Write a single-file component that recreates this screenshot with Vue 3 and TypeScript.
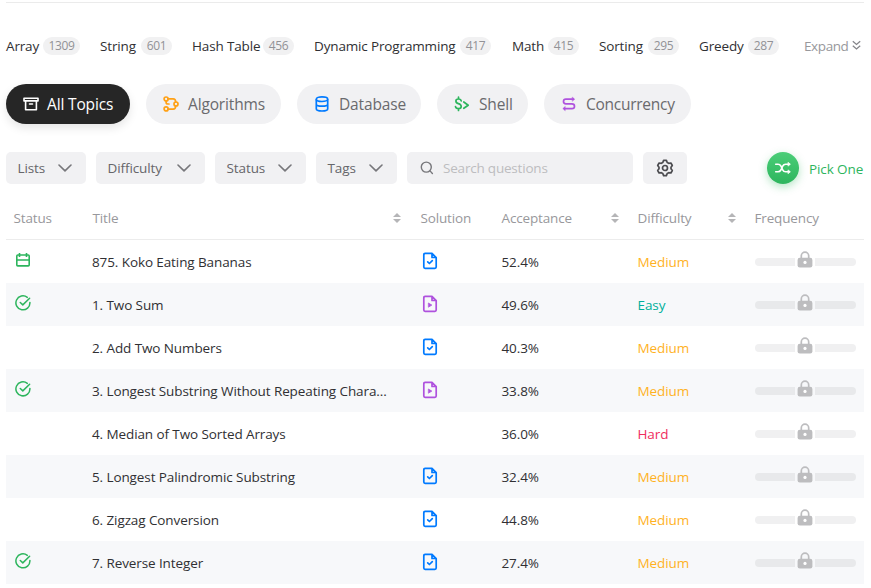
<script setup lang="ts">
interface Tag { name: string; count: number; cls?: string }
interface Topic { name: string; icon: string }
interface Problem {
  id: number
  title: string
  status: 'daily' | 'done' | ''
  solution: 'article' | 'video' | ''
  acceptance: string
  difficulty: 'Easy' | 'Medium' | 'Hard'
}

const tags: Tag[] = [
  { name: 'Array', count: 1309, cls: 't-array' },
  { name: 'String', count: 601, cls: 't-string' },
  { name: 'Hash Table', count: 456, cls: 't-hash' },
  { name: 'Dynamic Programming', count: 417, cls: 't-dp' },
  { name: 'Math', count: 415, cls: 't-math' },
  { name: 'Sorting', count: 295, cls: 't-sorting' },
  { name: 'Greedy', count: 287, cls: 't-greedy' },
]

const topics: Topic[] = [
  { name: 'All Topics', icon: 'all' },
  { name: 'Algorithms', icon: 'algorithms' },
  { name: 'Database', icon: 'database' },
  { name: 'Shell', icon: 'shell' },
  { name: 'Concurrency', icon: 'concurrency' },
]

const filters: string[] = ['Lists', 'Difficulty', 'Status', 'Tags']

const columns: { name: string; sortable: boolean }[] = [
  { name: 'Status', sortable: false },
  { name: 'Title', sortable: true },
  { name: 'Solution', sortable: false },
  { name: 'Acceptance', sortable: true },
  { name: 'Difficulty', sortable: true },
  { name: 'Frequency', sortable: false },
]

const problems: Problem[] = [
  { id: 875, title: 'Koko Eating Bananas', status: 'daily', solution: 'article', acceptance: '52.4%', difficulty: 'Medium' },
  { id: 1, title: 'Two Sum', status: 'done', solution: 'video', acceptance: '49.6%', difficulty: 'Easy' },
  { id: 2, title: 'Add Two Numbers', status: '', solution: 'article', acceptance: '40.3%', difficulty: 'Medium' },
  { id: 3, title: 'Longest Substring Without Repeating Chara...', status: 'done', solution: 'video', acceptance: '33.8%', difficulty: 'Medium' },
  { id: 4, title: 'Median of Two Sorted Arrays', status: '', solution: '', acceptance: '36.0%', difficulty: 'Hard' },
  { id: 5, title: 'Longest Palindromic Substring', status: '', solution: 'article', acceptance: '32.4%', difficulty: 'Medium' },
  { id: 6, title: 'Zigzag Conversion', status: '', solution: 'article', acceptance: '44.8%', difficulty: 'Medium' },
  { id: 7, title: 'Reverse Integer', status: 'done', solution: 'article', acceptance: '27.4%', difficulty: 'Medium' },
]
</script>

<template>
  <main class="page">
    <nav class="tags">
      <a v-for="tag in tags" :key="tag.name" class="tag" :class="tag.cls">
        <span class="tag-name">{{ tag.name }}</span>
        <span class="count">{{ tag.count }}</span>
      </a>
      <a class="expand">
        <span>Expand</span>
        <svg width="9" height="11" viewBox="0 0 9 11" fill="none" stroke="#85858a" stroke-width="1.3">
          <path d="M.8 1.2 4.5 4.4 8.2 1.2M.8 5.7 4.5 8.9 8.2 5.7" />
        </svg>
      </a>
    </nav>

    <nav class="topics">
      <a v-for="topic in topics" :key="topic.name" class="topic" :class="topic.icon">
        <svg v-if="topic.icon === 'all'" class="topic-icon" viewBox="0 0 16 16" fill="none" stroke="#fff" stroke-width="1.6" stroke-linejoin="round" stroke-linecap="round">
          <path d="M1 2.2H15V4.9H1ZM2.6 5V13.7H13.4V5M6.5 8H9.5" />
        </svg>
        <svg v-else-if="topic.icon === 'algorithms'" class="topic-icon" viewBox="0 0 16 16" fill="none" stroke="#ffa116" stroke-width="1.7">
          <circle cx="3.1" cy="3" r="2" />
          <circle cx="3.1" cy="12.9" r="2" />
          <circle cx="13" cy="8" r="2" />
          <path d="M5 2.8H10.2Q12.6 2.8 12.7 6M5 13.1H10.2Q12.6 13.1 12.7 10M3.1 5V6.2Q3.1 8 5 8H6" stroke-linecap="round" />
        </svg>
        <svg v-else-if="topic.icon === 'database'" class="topic-icon" viewBox="0 0 16 16" fill="none" stroke="#007aff" stroke-width="1.7">
          <ellipse cx="8" cy="3.2" rx="5.7" ry="2.3" />
          <path d="M2.3 3.2V12.7C2.3 14 4.8 15 8 15S13.7 14 13.7 12.7V3.2M2.3 7.9C2.3 9.2 4.8 10.2 8 10.2S13.7 9.2 13.7 7.9" />
        </svg>
        <svg v-else-if="topic.icon === 'shell'" class="topic-icon" viewBox="0 0 16 16" fill="none" stroke="#2db55d" stroke-width="1.7" stroke-linecap="round" stroke-linejoin="round">
          <path d="M7.2 4.9Q6.8 3 4.5 3Q1.9 3 1.9 5Q1.9 6.9 4.4 7.6Q7.2 8.4 7.2 10.5Q7.2 12.7 4.5 12.7Q1.9 12.7 1.5 10.6M4.5 1.2V3M4.5 12.7V14.5M9.8 6 14.2 9.2 9.8 12.3" />
        </svg>
        <svg v-else class="topic-icon" viewBox="0 0 16 16" fill="none" stroke="#af52de" stroke-width="1.7" stroke-linecap="round" stroke-linejoin="round">
          <path d="M12 3.2H4.9Q2.5 3.2 2.5 5.5T4.9 7.8H11Q13.5 7.8 13.5 10.2T11 12.6H4" />
          <path d="M11.5 1.3 13.7 3.2 11.5 5.1ZM4 10.7 1.8 12.6 4 14.5Z" fill="#af52de" stroke-width=".5" />
        </svg>
        <span>{{ topic.name }}</span>
      </a>
    </nav>

    <section class="toolbar">
      <button v-for="filter in filters" :key="filter" class="filter" :class="'f-' + filter.toLowerCase()">
        <span>{{ filter }}</span>
        <svg width="14" height="8" viewBox="0 0 14 8" fill="none" stroke="#77777b" stroke-width="1.6" stroke-linecap="round" stroke-linejoin="round">
          <path d="M1 1 7 6.9 13 1" />
        </svg>
      </button>
      <label class="search">
        <svg width="14" height="14" viewBox="0 0 14 14" fill="none" stroke="#77777b" stroke-width="1.4" stroke-linecap="round">
          <circle cx="6.3" cy="6.1" r="5" />
          <path d="M10 9.9 12.4 12.5" />
        </svg>
        <span>Search questions</span>
      </label>
      <button class="settings">
        <svg width="18" height="18" viewBox="0 0 18 18" fill="none" stroke="#4c4c50" stroke-width="1.7" stroke-linejoin="round">
          <path d="M7.6 1.4H10.4L11.2 3.5 12.7 4.3 14.9 4 16.3 6.5 15 8.2V9.8L16.3 11.5 14.9 14 12.7 13.7 11.2 14.5 10.4 16.6H7.6L6.8 14.5 5.3 13.7 3.1 14 1.7 11.5 3 9.8V8.2L1.7 6.5 3.1 4 5.3 4.3 6.8 3.5Z" />
          <circle cx="9" cy="9" r="2.5" />
        </svg>
      </button>
      <a class="pick">
        <span class="pick-disc">
          <svg width="18" height="14" viewBox="0 0 18 14" fill="none" stroke="#fff" stroke-width="1.6" stroke-linecap="round" stroke-linejoin="round">
            <path d="M1.7 3.2H4Q5.8 3.2 6.9 5L8.7 8.8Q9.6 10.8 11.6 10.8H14.8M1.7 10.8H4Q5.8 10.8 6.9 9L8.7 5.2Q9.6 3.2 11.6 3.2H14.8" />
            <path d="M14.3 1.5 16.4 3.2 14.3 4.9ZM14.3 9.1 16.4 10.8 14.3 12.5Z" fill="#fff" stroke-width=".7" />
          </svg>
        </span>
        <span class="pick-text">Pick One</span>
      </a>
    </section>

    <section class="table">
      <div class="row head">
        <div v-for="col in columns" :key="col.name" class="cell">
          <span>{{ col.name }}</span>
          <svg v-if="col.sortable" class="sort" width="8" height="10" viewBox="0 0 8 10" fill="#b5b5b7">
            <path d="M4 0 8 4H0ZM0 6H8L4 10Z" />
          </svg>
        </div>
      </div>
      <div v-for="p in problems" :key="p.id" class="row body-row">
        <div class="cell status">
          <svg v-if="p.status === 'daily'" width="16" height="16" viewBox="0 0 16 16" fill="none" stroke="#2db55d" stroke-width="1.6" stroke-linejoin="round">
            <rect x="1.8" y="3" width="12.4" height="10.9" rx="1" />
            <path d="M1.8 8H14.2M4.5 1V5M11.5 1V5" />
          </svg>
          <svg v-else-if="p.status === 'done'" width="16" height="16" viewBox="0 0 16 16" fill="none" stroke="#2db55d" stroke-width="1.5" stroke-linecap="round" stroke-linejoin="round">
            <path d="M12.3 2.4A7 7 0 1 0 14.9 7.4M5.3 7.5 7.8 9.9 14.6 3.2" />
          </svg>
        </div>
        <div class="cell title">{{ p.id }}. {{ p.title }}</div>
        <div class="cell solution">
          <svg v-if="p.solution" width="16" height="18" viewBox="0 0 16 18" fill="none" :class="p.solution" stroke="currentColor" stroke-width="1.7" stroke-linejoin="round" stroke-linecap="round">
            <path d="M10 1.4H3.1Q1.8 1.4 1.8 2.7V15.1Q1.8 16.4 3.1 16.4H12.9Q14.2 16.4 14.2 15.1V5.6ZM10 1.6V5.5H14" />
            <path v-if="p.solution === 'article'" d="M5.7 9.9 7.4 11.5 10.3 8.7" />
            <path v-else d="M6.7 8.2 9.8 10.1 6.7 12Z" fill="currentColor" stroke-width=".8" />
          </svg>
        </div>
        <div class="cell accept">{{ p.acceptance }}</div>
        <div class="cell" :class="p.difficulty.toLowerCase()">{{ p.difficulty }}</div>
        <div class="cell frequency">
          <span class="bar"></span>
          <svg class="lock" width="16" height="17" viewBox="0 0 16 17">
            <path d="M4.3 8V4.9A3.7 3.7 0 0 1 11.7 4.9V8" fill="none" stroke="#bdbdbf" stroke-width="1.7" />
            <rect x=".6" y="6.8" width="14.8" height="9.7" rx="2.2" fill="#bdbdbf" />
            <circle cx="8" cy="11.4" r="1.6" fill="#fff" />
          </svg>
          <span class="bar"></span>
        </div>
      </div>
    </section>
  </main>
</template>

<style>
body {
  margin: 0;
  background: #fff;
}
</style>

<style scoped>
* {
  box-sizing: border-box;
}

.page {
  width: 858px;
  height: 588px;
  margin-left: 6px;
  padding-top: 2px;
  font-family: "Open Sans", "Noto Sans", sans-serif;
  font-size: 13.5px;
  letter-spacing: -0.1px;
  color: #303033;
  white-space: nowrap;
}

.tags {
  height: 82px;
  padding-top: 4px;
  display: flex;
  align-items: center;
  border-top: 1px solid #ebebeb;
}

.tag {
  display: flex;
  align-items: center;
  justify-content: space-between;
  width: 72px;
  margin-right: 20px;
  letter-spacing: -0.15px;
}

.tag.t-array { width: 74px; }
.tag.t-hash { width: 102px; }
.tag.t-dp { width: 177px; margin-right: 21px; }
.tag.t-math { width: 67px; }
.tag.t-sorting { width: 80px; }
.tag.t-greedy { width: 80px; margin-right: 25px; }

.count {
  height: 18px;
  width: 31px;
  border-radius: 9px;
  background: #f1f1f2;
  color: #929296;
  font-size: 12px;
  line-height: 18px;
  text-align: center;
  letter-spacing: -0.3px;
}

.t-array .count { width: 37px; }

.expand {
  display: flex;
  align-items: center;
  gap: 4px;
  color: #98989c;
  letter-spacing: -0.4px;
}

.topics {
  display: flex;
  gap: 16px;
  height: 40px;
}

.topic {
  display: flex;
  align-items: center;
  width: 124px;
  padding-left: 17px;
  gap: 9px;
  border-radius: 20px;
  background: #f1f1f3;
  color: #6a6a6d;
  font-size: 15.5px;
  letter-spacing: -0.15px;
}

.topic.all {
  gap: 8px;
  background: #262626;
  color: #fff;
  box-shadow: 0 4px 10px rgba(0, 0, 0, .1);
}

.topic.algorithms { width: 135px; }
.topic.shell { width: 91px; }
.topic.concurrency { width: 147px; letter-spacing: -0.27px; }

.topic-icon {
  width: 16px;
  height: 16px;
  flex: none;
}

.toolbar {
  display: flex;
  gap: 10px;
  height: 32px;
  margin-top: 28px;
}

button {
  border: 0;
  padding: 0;
  font: inherit;
  letter-spacing: inherit;
}

.filter,
.search,
.settings {
  display: flex;
  align-items: center;
  border-radius: 5px;
  background: #f1f1f3;
  color: #66666a;
}

.filter {
  justify-content: space-between;
  padding: 0 14px 0 11.5px;
}

.f-lists { width: 80px; }
.f-difficulty { width: 109px; }
.f-status { width: 91px; }
.f-tags { width: 81px; }

.search {
  width: 226px;
  padding-left: 13px;
  gap: 9px;
  color: #bdbdc0;
  letter-spacing: -0.2px;
}

.settings {
  width: 44px;
  justify-content: center;
}

.pick {
  display: flex;
  align-items: center;
  gap: 10px;
  margin-left: auto;
  color: #2db55d;
}

.pick-disc {
  display: flex;
  align-items: center;
  justify-content: center;
  width: 32px;
  height: 32px;
  border-radius: 50%;
  background: linear-gradient(#4bce78, #2db55d);
  box-shadow: 0 3px 8px rgba(45, 181, 93, .35);
}

.pick-text {
  width: 55px;
  padding-top: 2px;
}

.table {
  padding-top: 13px;
}

.row {
  display: grid;
  grid-template-columns: 79px 328px 81px 136px 117px 117px;
  height: 43px;
}

.cell {
  display: flex;
  align-items: center;
  padding-left: 7.5px;
  padding-top: 1px;
}

.title {
  padding-left: 7px;
}

.head {
  border-bottom: 1px solid #ececec;
  color: #98989c;
  letter-spacing: -0.15px;
}

.head .cell {
  justify-content: space-between;
  padding-top: 0;
  padding-bottom: 1px;
  padding-right: 12px;
}

.head .cell:nth-child(4),
.head .cell:nth-child(5) {
  padding-right: 11px;
}

.body-row:nth-child(odd) {
  background: #f7f8fa;
}

.status {
  padding-left: 9px;
  padding-bottom: 4px;
}

.solution {
  padding-left: 9px;
  padding-top: 0;
  padding-bottom: 1px;
}

.article { color: #007aff; }
.video { color: #af52de; }
.easy { color: #00af9b; }
.medium { color: #ffb21f; }
.hard { color: #ef2d5e; }

.frequency {
  padding: 0 8px;
  justify-content: space-between;
}

.bar {
  width: 40px;
  height: 8px;
  margin-top: 1px;
  background: #f0f0f1;
}

.body-row:nth-child(odd) .bar {
  background: #e8e9eb;
}

.bar:first-child { border-radius: 4px 0 0 4px; }
.bar:last-child { width: 41px; border-radius: 0 4px 4px 0; }

.lock {
  margin-bottom: 4px;
}
</style>
